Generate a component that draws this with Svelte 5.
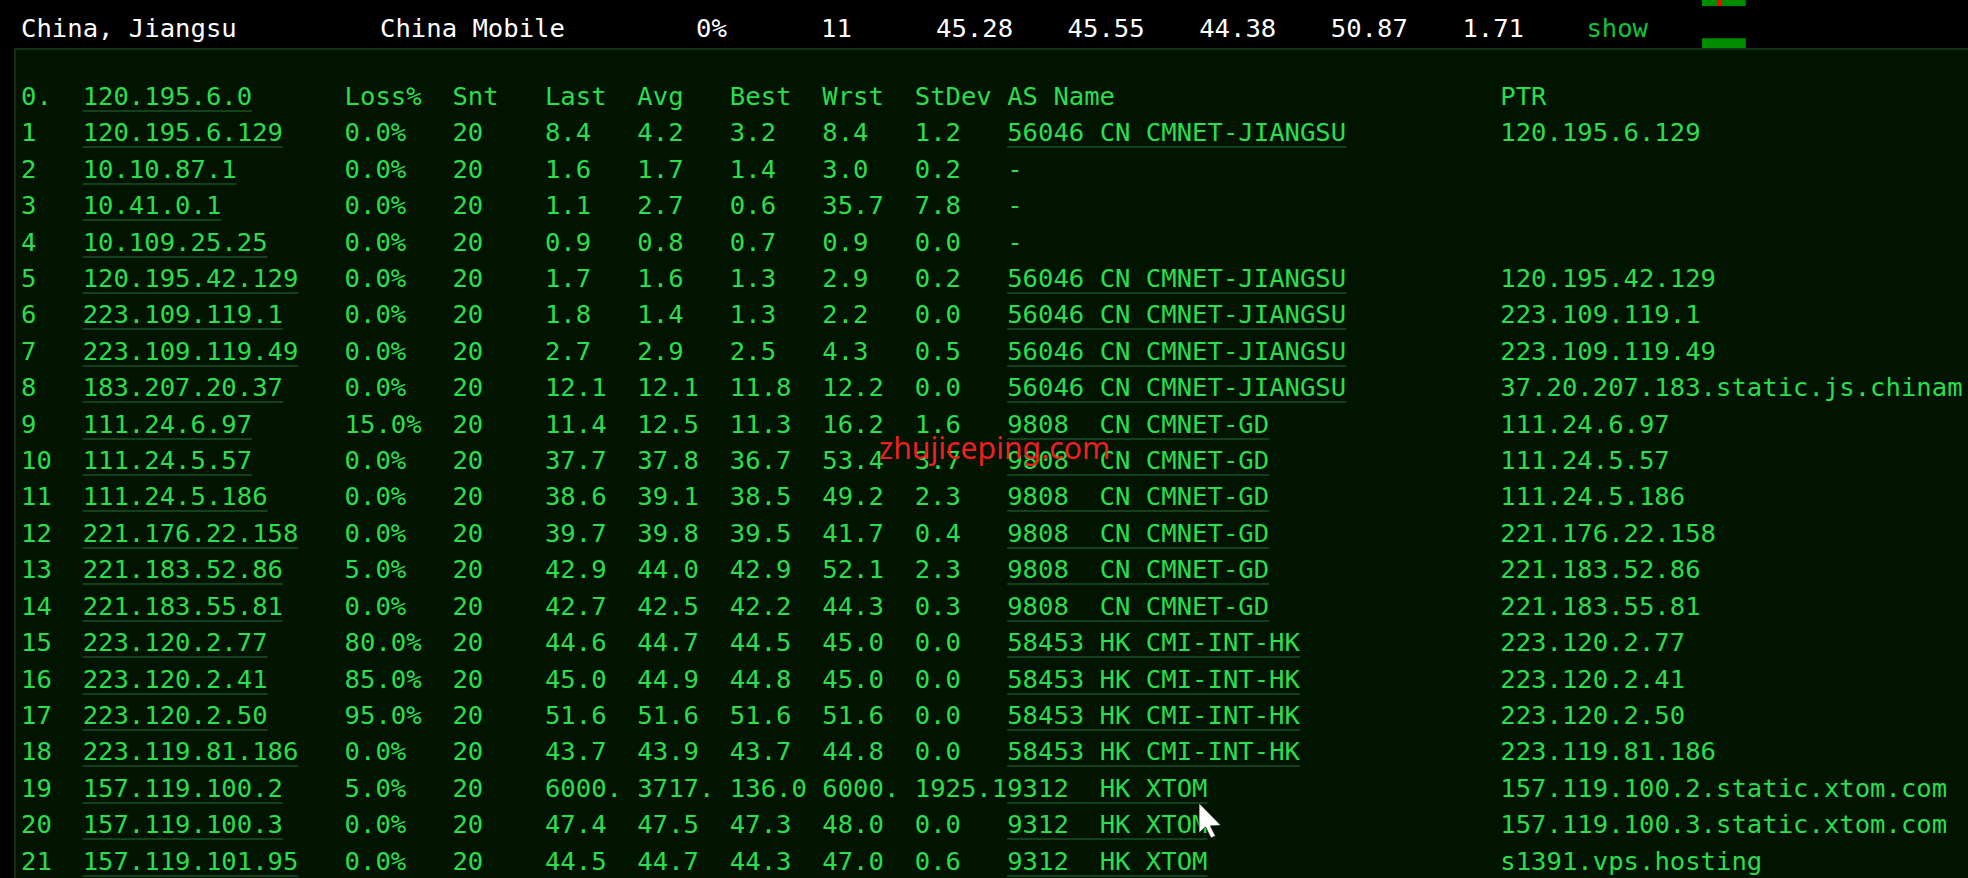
<script>
	// строки трассировки: хост, потери, snt, last, avg, best, wrst, stdev, as, ptr
	const rows = [
		['1', '120.195.6.129', '0.0%', '20', '8.4', '4.2', '3.2', '8.4', '1.2', '56046 CN CMNET-JIANGSU', '120.195.6.129'],
		['2', '10.10.87.1', '0.0%', '20', '1.6', '1.7', '1.4', '3.0', '0.2', '-', ''],
		['3', '10.41.0.1', '0.0%', '20', '1.1', '2.7', '0.6', '35.7', '7.8', '-', ''],
		['4', '10.109.25.25', '0.0%', '20', '0.9', '0.8', '0.7', '0.9', '0.0', '-', ''],
		['5', '120.195.42.129', '0.0%', '20', '1.7', '1.6', '1.3', '2.9', '0.2', '56046 CN CMNET-JIANGSU', '120.195.42.129'],
		['6', '223.109.119.1', '0.0%', '20', '1.8', '1.4', '1.3', '2.2', '0.0', '56046 CN CMNET-JIANGSU', '223.109.119.1'],
		['7', '223.109.119.49', '0.0%', '20', '2.7', '2.9', '2.5', '4.3', '0.5', '56046 CN CMNET-JIANGSU', '223.109.119.49'],
		['8', '183.207.20.37', '0.0%', '20', '12.1', '12.1', '11.8', '12.2', '0.0', '56046 CN CMNET-JIANGSU', '37.20.207.183.static.js.chinam'],
		['9', '111.24.6.97', '15.0%', '20', '11.4', '12.5', '11.3', '16.2', '1.6', '9808  CN CMNET-GD', '111.24.6.97'],
		['10', '111.24.5.57', '0.0%', '20', '37.7', '37.8', '36.7', '53.4', '3.7', '9808  CN CMNET-GD', '111.24.5.57'],
		['11', '111.24.5.186', '0.0%', '20', '38.6', '39.1', '38.5', '49.2', '2.3', '9808  CN CMNET-GD', '111.24.5.186'],
		['12', '221.176.22.158', '0.0%', '20', '39.7', '39.8', '39.5', '41.7', '0.4', '9808  CN CMNET-GD', '221.176.22.158'],
		['13', '221.183.52.86', '5.0%', '20', '42.9', '44.0', '42.9', '52.1', '2.3', '9808  CN CMNET-GD', '221.183.52.86'],
		['14', '221.183.55.81', '0.0%', '20', '42.7', '42.5', '42.2', '44.3', '0.3', '9808  CN CMNET-GD', '221.183.55.81'],
		['15', '223.120.2.77', '80.0%', '20', '44.6', '44.7', '44.5', '45.0', '0.0', '58453 HK CMI-INT-HK', '223.120.2.77'],
		['16', '223.120.2.41', '85.0%', '20', '45.0', '44.9', '44.8', '45.0', '0.0', '58453 HK CMI-INT-HK', '223.120.2.41'],
		['17', '223.120.2.50', '95.0%', '20', '51.6', '51.6', '51.6', '51.6', '0.0', '58453 HK CMI-INT-HK', '223.120.2.50'],
		['18', '223.119.81.186', '0.0%', '20', '43.7', '43.9', '43.7', '44.8', '0.0', '58453 HK CMI-INT-HK', '223.119.81.186'],
		['19', '157.119.100.2', '5.0%', '20', '6000.', '3717.', '136.0', '6000.', '1925.1', '9312  HK XTOM', '157.119.100.2.static.xtom.com'],
		['20', '157.119.100.3', '0.0%', '20', '47.4', '47.5', '47.3', '48.0', '0.0', '9312  HK XTOM', '157.119.100.3.static.xtom.com'],
		['21', '157.119.101.95', '0.0%', '20', '44.5', '44.7', '44.3', '47.0', '0.6', '9312  HK XTOM', 's1391.vps.hosting']
	];

	function stats(r) {
		return r[2].padEnd(7) + r[3].padEnd(6) + r[4].padEnd(6) + r[5].padEnd(6) + r[6].padEnd(6) + r[7].padEnd(6) + r[8].padEnd(6);
	}
</script>

<main class="page">
	<div class="summary">
		<span class="c1">China, Jiangsu</span>
		<span class="c2">China Mobile</span>
		<span class="c3">0%</span>
		<span class="c4">11</span>
		<span class="c5">45.28</span>
		<span class="c5">45.55</span>
		<span class="c5">44.38</span>
		<span class="c5">50.87</span>
		<span class="c6">1.71</span>
		<span class="c7">show</span>
		<div class="bars">
			<div class="bar top"><i></i></div>
			<div class="bar bottom"></div>
		</div>
	</div>

	<pre class="trace">{'0.'.padEnd(4)}<a href="#top">120.195.6.0</a>{''.padEnd(6)}{'Loss%'.padEnd(7)}{'Snt'.padEnd(6)}{'Last'.padEnd(6)}{'Avg'.padEnd(6)}{'Best'.padEnd(6)}{'Wrst'.padEnd(6)}{'StDev'.padEnd(6)}{'AS Name'.padEnd(32)}PTR
{#each rows as r}{r[0].padEnd(4)}<a href="#top">{r[1]}</a>{''.padEnd(17 - r[1].length)}{stats(r)}{#if r[9] === '-'}{'-'.padEnd(32)}{:else}<a href="#top">{r[9]}</a>{''.padEnd(32 - r[9].length)}{/if}{r[10]}
{/each}</pre>

	<span class="mark">zhujiceping.com</span>

	<svg class="cursor" width="24" height="36" viewBox="0 0 24 36">
		<path d="M1 0 L1 30 L7.5 24 L13 35 L17.5 33 L12.5 23 L23 22.5 Z" fill="#fff" stroke="#111" stroke-width="0.8" />
	</svg>
</main>

<style>
	:global(body) {
		margin: 0;
		background: #000;
	}

	.page {
		position: relative;
		height: 878px;
		overflow: hidden;
		background: #000;
		font-family: "DejaVu Sans Mono", "Liberation Mono", monospace;
		font-size: 25.6px;
	}

	.summary {
		display: flex;
		align-items: center;
		height: 48px;
		padding-left: 21px;
		color: #fff;
		white-space: pre;
	}

	.summary span {
		padding-top: 8px;
	}

	.c1 { width: 359px; }
	.c2 { width: 316px; }
	.c3 { width: 125px; }
	.c4 { width: 115px; }
	.c5 { width: 131.6px; }
	.c6 { width: 124px; }
	.c7 { width: 116px; color: #0fc63a; }

	.bars {
		display: flex;
		flex-direction: column;
		justify-content: space-between;
		width: 44px;
		height: 48px;
	}

	.bar {
		background: #008c00;
		border-right: 1px solid #006a00;
	}

	.bar.top {
		height: 6px;
		display: flex;
		padding-left: 15px;
	}

	.bar.top i {
		width: 5px;
		background: #f00;
	}

	.bar.bottom {
		height: 9px;
		border-top: 1px solid #006a00;
	}

	.trace {
		margin: 0 0 0 14px;
		padding: 28px 0 0 5px;
		border-top: 2px solid #123012;
		border-left: 2px solid #123012;
		background: #001400;
		color: #2ade4e;
		font: inherit;
		line-height: 36.4px;
		min-height: 800px;
	}

	.trace a {
		color: inherit;
		text-decoration: underline;
		text-decoration-color: #14401e;
		text-decoration-thickness: 2px;
		text-underline-offset: 5px;
	}

	.mark {
		position: absolute;
		left: 879px;
		top: 427px;
		color: #f01f1f;
		font-family: "Noto Sans", sans-serif;
		font-size: 30.2px;
	}

	.cursor {
		position: absolute;
		left: 1198px;
		top: 803px;
	}
</style>
